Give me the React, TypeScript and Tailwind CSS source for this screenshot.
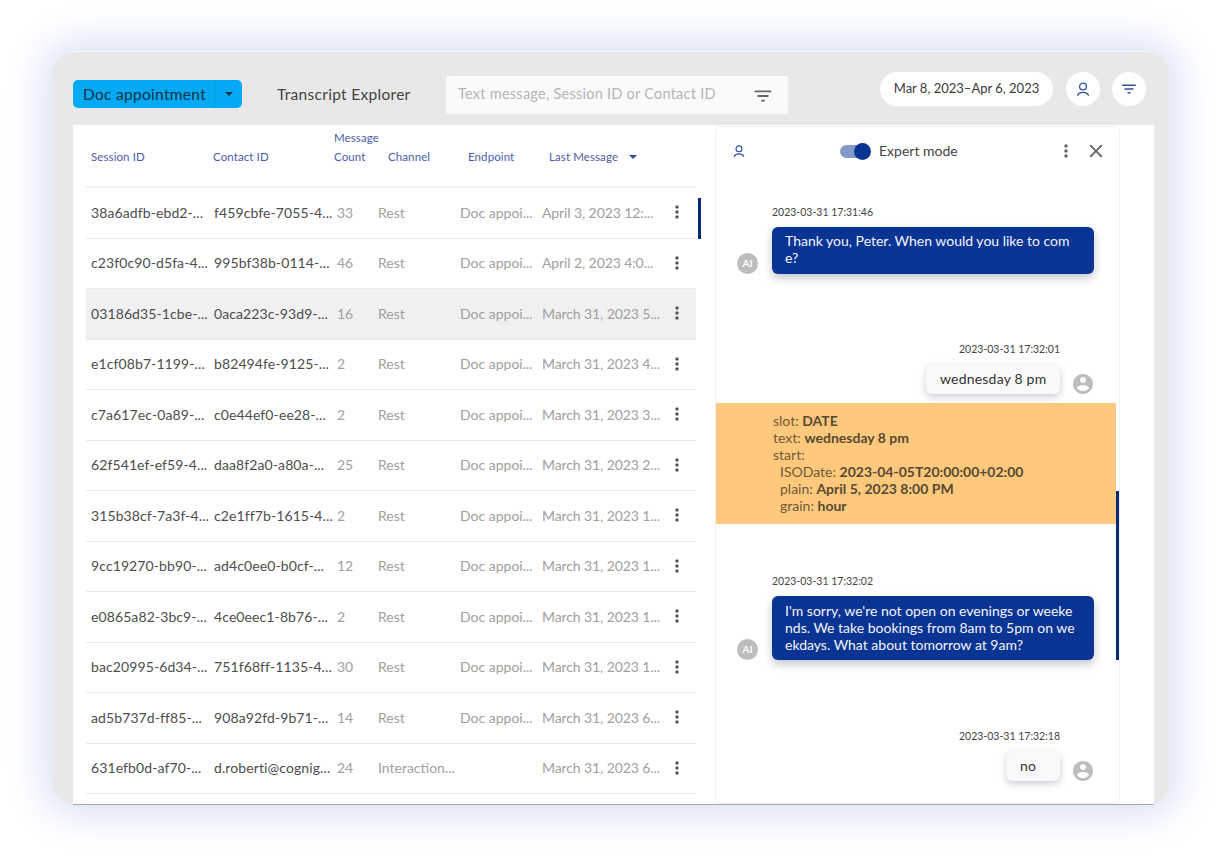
const rows = [
  ['38a6adfb-ebd2-...', 'f459cbfe-7055-4...', '33', 'Rest', 'Doc appoi...', 'April 3, 2023 12:...'],
  ['c23f0c90-d5fa-4...', '995bf38b-0114-...', '46', 'Rest', 'Doc appoi...', 'April 2, 2023 4:0...'],
  ['03186d35-1cbe-...', '0aca223c-93d9-...', '16', 'Rest', 'Doc appoi...', 'March 31, 2023 5...'],
  ['e1cf08b7-1199-...', 'b82494fe-9125-...', '2', 'Rest', 'Doc appoi...', 'March 31, 2023 4...'],
  ['c7a617ec-0a89-...', 'c0e44ef0-ee28-...', '2', 'Rest', 'Doc appoi...', 'March 31, 2023 3...'],
  ['62f541ef-ef59-4...', 'daa8f2a0-a80a-...', '25', 'Rest', 'Doc appoi...', 'March 31, 2023 2...'],
  ['315b38cf-7a3f-4...', 'c2e1ff7b-1615-4...', '2', 'Rest', 'Doc appoi...', 'March 31, 2023 1...'],
  ['9cc19270-bb90-...', 'ad4c0ee0-b0cf-...', '12', 'Rest', 'Doc appoi...', 'March 31, 2023 1...'],
  ['e0865a82-3bc9-...', '4ce0eec1-8b76-...', '2', 'Rest', 'Doc appoi...', 'March 31, 2023 1...'],
  ['bac20995-6d34-...', '751f68ff-1135-4...', '30', 'Rest', 'Doc appoi...', 'March 31, 2023 1...'],
  ['ad5b737d-ff85-...', '908a92fd-9b71-...', '14', 'Rest', 'Doc appoi...', 'March 31, 2023 6...'],
  ['631efb0d-af70-...', 'd.roberti@cognig...', '24', 'Interaction...', '', 'March 31, 2023 6...'],
]

const FILTER = 'M10 18h4v-2h-4v2zM3 6v2h18V6H3zm3 7h12v-2H6v2z'
const KEBAB = 'M12 8c1.1 0 2-.9 2-2s-.9-2-2-2-2 .9-2 2 .9 2 2 2zm0 2c-1.1 0-2 .9-2 2s.9 2 2 2 2-.9 2-2-.9-2-2-2zm0 6c-1.1 0-2 .9-2 2s.9 2 2 2 2-.9 2-2-.9-2-2-2z'
const ACCOUNT = 'M12 2C6.48 2 2 6.48 2 12s4.48 10 10 10 10-4.48 10-10S17.52 2 12 2zm0 3c1.66 0 3 1.34 3 3s-1.34 3-3 3-3-1.34-3-3 1.34-3 3-3zm0 14.2c-2.5 0-4.71-1.28-6-3.22.03-1.99 4-3.08 6-3.08 1.99 0 5.97 1.09 6 3.08-1.29 1.94-3.5 3.22-6 3.22z'
const CLOSE = 'M19 6.41L17.59 5 12 10.59 6.41 5 5 6.41 10.59 12 5 17.59 6.41 19 12 13.41 17.59 19 19 17.59 13.41 12z'

function Icon({ d, size, className }: { d: string; size: number; className?: string }) {
  return (
    <svg width={size} height={size} viewBox="0 0 24 24" fill="currentColor" className={className}>
      <path d={d} />
    </svg>
  )
}

function PersonIcon({ size, className }: { size: number; className?: string }) {
  return (
    <svg width={size} height={size} viewBox="0 0 16 16" fill="none" stroke="currentColor" strokeWidth="1.3" className={className}>
      <circle cx="8" cy="5.5" r="3.4" />
      <path d="M2.6 14.200c.9-2 3-2.900 5.400-2.900s4.500.9 5.400 2.900" strokeLinecap="round" />
    </svg>
  )
}

function Caret({ className }: { className?: string }) {
  return <span className={`w-0 h-0 border-x-[4px] border-x-transparent border-t-[4px] ${className}`} />
}

function Botmsg({ time, lines, box }: { time: string; lines: string[]; box: string }) {
  return (
    <div className="pl-[21px]">
      <div className="pl-[35px] text-[10.5px] leading-[14px] text-[#444]">{time}</div>
      <div className="flex items-end mt-[8px]">
        <div className="w-[21px] h-[21px] rounded-full bg-[#bdbdbd] text-white text-[10px] font-bold flex items-center justify-center mr-[14px]">AI</div>
        <div className={`w-[322px] ${box} bg-[#0a3494] text-[#f2f4fa] text-[14px] leading-[17px] pl-[13px] rounded-[6px] shadow-[0_4px_8px_rgba(60,60,90,0.3)] overflow-hidden`}>
          {lines.map(l => <div key={l} className="whitespace-nowrap">{l}</div>)}
        </div>
      </div>
    </div>
  )
}

function UserMsg({ time, text, width }: { time: string; text: string; width: string }) {
  return (
    <div className="pr-[26px] flex flex-col items-end">
      <div className="pr-[33px] text-[10.5px] leading-[14px] text-[#444]">{time}</div>
      <div className="flex items-end mt-[8px]">
        <div className={`${width} h-[30px] bg-[#f9f9fb] text-[#333] text-[14px] tracking-[0.2px] leading-[30px] pl-[14px] rounded-[6px] shadow-[0_3px_7px_rgba(60,60,90,0.25)]`}>{text}</div>
        <Icon d={ACCOUNT} size={24} className="text-[#bdbdbd] ml-[11px] -mr-[2px] -mb-[2px]" />
      </div>
    </div>
  )
}

export default function App() {
  return (
    <div className="w-[1223px] h-[856px] bg-white pt-[51px] pl-[53px] overflow-hidden font-['Lato','Noto_Sans',sans-serif]">
      <div className="w-[1116px] h-[754px] bg-[#e8e8e8] rounded-[22px] flex flex-col shadow-[0_0_40px_10px_#d8e0f4] border-t border-[#f4f5fa]">
        <div className="h-[73px] flex items-start shrink-0 pl-[20px] pr-[23px]">
          <div className="mt-[28px] w-[169px] h-[28px] flex rounded-[5px] bg-[#03a9f4] text-[#17323f] text-[15.5px] items-center">
            <span className="w-[142px] pl-[10px] h-full leading-[28px] tracking-[0.3px] border-r border-[#0b98d8] whitespace-nowrap">Doc appointment</span>
            <span className="flex-1 flex justify-center"><Caret className="border-t-[#17323f]" /></span>
          </div>
          <div className="ml-[35px] mt-[33px] w-[169px] text-[15.5px] leading-[18px] tracking-[0.3px] text-[#444] whitespace-nowrap">Transcript Explorer</div>
          <div className="mt-[24px] w-[342px] h-[38px] rounded-[3px] bg-[#fafafa] flex items-center pl-[12px] pr-[14px] text-[14.5px] tracking-[0.25px] text-[#b5b5b5]">
            <span className="flex-1 -mt-[2px] whitespace-nowrap">Text message, Session ID or Contact ID</span>
            <Icon d={FILTER} size={22} className="text-[#666] mt-[1px]" />
          </div>
          <div className="ml-auto mt-[20px] flex items-center">
            <div className="w-[173px] h-[34px] rounded-full bg-white text-[13px] text-[#3a3a3a] flex items-center justify-center">Mar 8, 2023–Apr 6, 2023</div>
            <div className="ml-[13px] w-[34px] h-[34px] rounded-full bg-white flex items-center justify-center text-[#2c4ea3]"><PersonIcon size={16} /></div>
            <div className="ml-[12px] w-[34px] h-[34px] rounded-full bg-white flex items-center justify-center text-[#2c4ea3]"><Icon d={FILTER} size={18} /></div>
          </div>
        </div>

        <div className="ml-[20px] mr-[15px] flex-1 bg-white border-b border-[#a9a9a9] flex min-h-0">
          <div className="w-[623px] pl-[13px] shrink-0 relative">
            <div className="w-[610px] h-[63px] border-b-2 border-[#f1f1f1] flex items-start text-[11.500px] leading-[19px] tracking-[0.1px] text-[#4a5ca8]">
              <div className="w-[126px] pl-[5px] pt-[22px]">Session ID</div>
              <div className="w-[122px] pl-[1px] pt-[22px]">Contact ID</div>
              <div className="w-[54px] pt-[3px]">Message<br />Count</div>
              <div className="w-[80px] pt-[22px]">Channel</div>
              <div className="w-[81px] pt-[22px]">Endpoint</div>
              <div className="pt-[22px] flex items-center gap-[11px]">Last Message <Caret className="border-t-[#2c4ea3]" /></div>
            </div>
            {rows.map((r, i) => (
              <div key={r[0]} className={`w-[610px] h-[50.5px] border-b border-[#e9e9e9] flex items-center pb-[1px] text-[14px] text-[#a0a0a0] ${i === 2 ? 'bg-[#f0f0f0]' : ''}`}>
                <div className="w-[128px] pl-[5px] text-[#4d4d4d] tracking-[0.1px] whitespace-nowrap">{r[0]}</div>
                <div className="w-[123px] text-[#4d4d4d] tracking-[0.1px] whitespace-nowrap">{r[1]}</div>
                <div className="w-[41px]">{r[2]}</div>
                <div className="w-[82px] whitespace-nowrap">{r[3]}</div>
                <div className="w-[82px] whitespace-nowrap">{r[4]}</div>
                <div className="w-[125px] tracking-[-0.1px] whitespace-nowrap">{r[5]}</div>
                <Icon d={KEBAB} size={20} className="text-[#555]" />
              </div>
            ))}
            <div className="absolute left-[625px] top-[73px] w-[3px] h-[41px] bg-[#0a2a78]" />
          </div>

          <div className="ml-[19px] w-[405px] mt-[1px] mb-0 rounded-[6px] border border-[#f0f0f0] overflow-hidden relative">
            <div className="h-[48px] flex items-center pl-[16px] pr-[12px]">
              <PersonIcon size={14} className="text-[#2c4ea3]" />
              <div className="ml-[94px] w-[31px] h-[17px] relative flex items-center">
                <div className="w-[28px] h-[13px] rounded-full bg-[#8498c9]" />
                <div className="absolute right-0 w-[17px] h-[17px] rounded-full bg-[#0a3494]" />
              </div>
              <span className="ml-[8px] -mt-[2px] text-[14px] text-[#444]">Expert mode</span>
              <Icon d={KEBAB} size={20} className="ml-auto text-[#666]" />
              <Icon d={CLOSE} size={22} className="ml-[9px] text-[#666]" />
            </div>
            <div className="pt-[30px]">
              <Botmsg time="2023-03-31 17:31:46" box="h-[47px] pt-[5px]" lines={['Thank you, Peter. When would you like to com', 'e?']} />
              <div className="h-[68px]" />
              <UserMsg time="2023-03-31 17:32:01" text="wednesday 8 pm" width="w-[134px]" />
              <div className="w-[400px] h-[121px] mt-[9px] bg-[#fec97c] pl-[57px] pt-[9px] text-[14px] leading-[17px] text-[#6f5a38]">
                <div>slot: <b className="text-[#564a33]">DATE</b></div>
                <div>text: <b className="text-[#564a33]">wednesday 8 pm</b></div>
                <div>start:</div>
                <div className="pl-[7px]">ISODate: <b className="text-[#564a33]">2023-04-05T20:00:00+02:00</b></div>
                <div className="pl-[7px]">plain: <b className="text-[#564a33]">April 5, 2023 8:00 PM</b></div>
                <div className="pl-[7px]">grain: <b className="text-[#564a33]">hour</b></div>
              </div>
              <div className="h-[50px]" />
              <Botmsg time="2023-03-31 17:32:02" box="h-[64px] pt-[6px]" lines={["I'm sorry, we're not open on evenings or weeke", 'nds. We take bookings from 8am to 5pm on we', 'ekdays. What about tomorrow at 9am?']} />
              <div className="h-[69px]" />
              <UserMsg time="2023-03-31 17:32:18" text="no" width="w-[54px]" />
            </div>
            <div className="absolute right-[0px] top-[364px] w-[3px] h-[169px] bg-[#0a2a78]" />
          </div>
        </div>
      </div>
    </div>
  )
}
